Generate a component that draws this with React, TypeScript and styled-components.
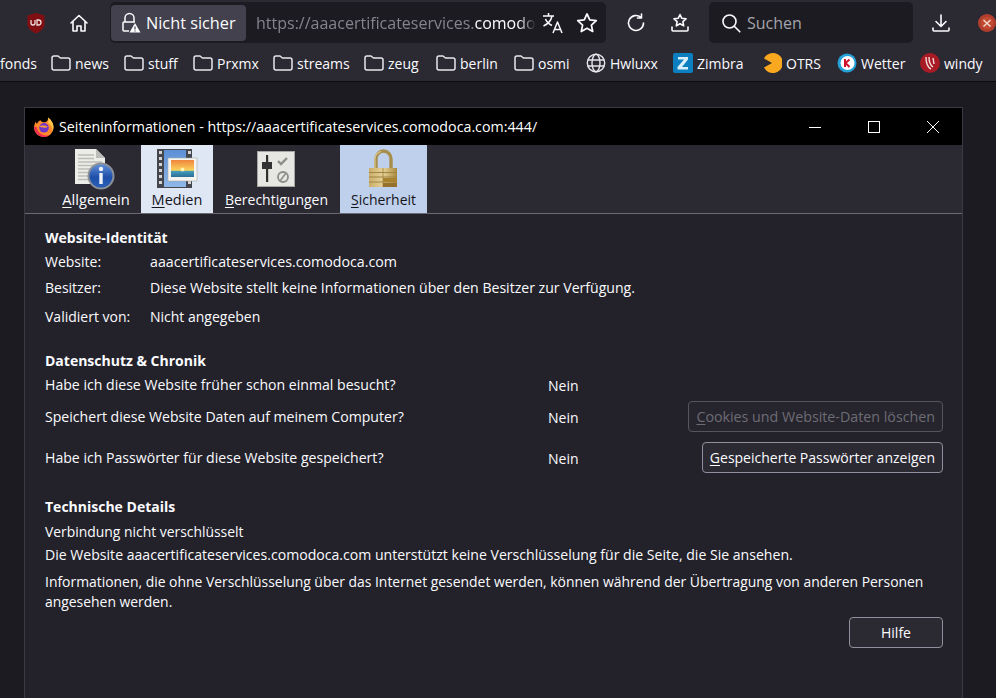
import React from "react";
import styled, { createGlobalStyle } from "styled-components";

const GlobalStyle = createGlobalStyle`
  html, body {
    margin: 0;
    padding: 0;
    width: 996px;
    height: 698px;
    overflow: hidden;
    background: #1c1b22;
    font-family: "Open Sans", "Noto Sans", sans-serif;
    color: #fbfbfe;
  }
`;

const Page = styled.div`
  width: 996px;
  height: 698px;
  display: flex;
  flex-direction: column;
  overflow: hidden;
`;

const Toolbar = styled.div`
  height: 45px;
  background: #2b2a33;
  display: flex;
  align-items: center;
  white-space: nowrap;
  overflow: hidden;
`;

const ToolIcon = styled.div<{ $w?: number; $ml?: number }>`
  width: ${(p) => p.$w ?? 22}px;
  margin-left: ${(p) => p.$ml ?? 0}px;
  height: 22px;
  flex: none;
  display: flex;
  align-items: center;
  justify-content: center;
`;

const UrlBar = styled.div`
  margin-left: 20px;
  width: 496px;
  height: 41px;
  flex: none;
  background: #1c1b22;
  border-radius: 5px;
  display: flex;
  align-items: center;
`;

const Identity = styled.div`
  margin-left: 1px;
  width: 135px;
  height: 36px;
  flex: none;
  background: #42414d;
  border-radius: 4px;
  display: flex;
  align-items: center;
  gap: 5px;
  padding-left: 10px;
  box-sizing: border-box;
  font-size: 16.3px;
`;

const UrlText = styled.div`
  margin-left: 10px;
  width: 280px;
  overflow: hidden;
  font-size: 16px;
  color: #85848c;
  flex: none;
  -webkit-mask-image: linear-gradient(to right, #000 262px, transparent 280px);
  mask-image: linear-gradient(to right, #000 262px, transparent 280px);

  b {
    font-weight: 400;
    color: #fbfbfe;
  }
`;

const SearchBox = styled.div`
  margin-left: 18px;
  width: 204px;
  height: 41px;
  flex: none;
  background: #1c1b22;
  border-radius: 5px;
  display: flex;
  align-items: center;
  gap: 6px;
  padding-left: 12px;
  box-sizing: border-box;
  font-size: 16px;
  color: #a5a4ab;
`;

const BookmarkBar = styled.div`
  height: 36px;
  background: #2b2a33;
  border-bottom: 1px solid #0c0c0d;
  display: flex;
  align-items: center;
  font-size: 14px;
  color: #fbfbfe;
  white-space: nowrap;
  overflow: hidden;
`;

const Bookmark = styled.div<{ $w: number }>`
  width: ${(p) => p.$w}px;
  display: flex;
  align-items: center;
  gap: 4px;
  flex: none;
`;

const Content = styled.div`
  flex: 1;
  background: #1c1b22;
  padding: 25px 0 0 24px;
  min-height: 0;
`;

const Dialog = styled.div`
  width: 937px;
  height: 620px;
  background: #23222b;
  border: 1px solid #3a3a42;
  border-bottom: 0;
  display: flex;
  flex-direction: column;
`;

const TitleBar = styled.div`
  height: 37px;
  background: #000;
  flex: none;
  display: flex;
  align-items: center;
  padding-left: 9px;
  font-size: 14.25px;
  color: #fff;
  gap: 5px;
`;

const TitleText = styled.div`
  flex: 1;
`;

const WinControls = styled.div`
  display: flex;
  flex: none;
`;

const WinButton = styled.div`
  width: 59px;
  height: 37px;
  display: flex;
  align-items: center;
  justify-content: center;
`;

const TabStrip = styled.div`
  height: 69px;
  box-sizing: border-box;
  flex: none;
  background: #2b2a33;
  border-bottom: 1px solid #6b6a72;
  display: flex;
  padding-left: 26px;
`;

const Tab = styled.div<{ $bg?: string; $w: number; $size?: number }>`
  width: ${(p) => p.$w}px;
  background: ${(p) => p.$bg ?? "transparent"};
  color: ${(p) => (p.$bg ? "#15141a" : "#fbfbfe")};
  display: flex;
  flex-direction: column;
  align-items: center;
  font-size: ${(p) => p.$size ?? 14}px;
  padding-top: 1px;
  box-sizing: border-box;
  height: 68px;

  svg {
    display: block;
    flex: none;
  }

  span {
    line-height: 19px;
  }
`;

const Body = styled.div`
  flex: 1;
  padding: 14px 19px 0 20px;
  font-size: 14px;
  color: #fbfbfe;
`;

const Heading = styled.div`
  font-weight: 700;
  font-size: 14px;
  line-height: 20px;
`;

const InfoRow = styled.div<{ $mt: number }>`
  display: flex;
  margin-top: ${(p) => p.$mt}px;
  line-height: 20px;
`;

const InfoLabel = styled.div`
  width: 105px;
  flex: none;
`;

const InfoValue = styled.div<{ $size?: number }>`
  font-size: ${(p) => p.$size ?? 14}px;
`;

const Section = styled.div<{ $mt: number }>`
  margin-top: ${(p) => p.$mt}px;
`;

const PrivacyRow = styled.div<{ $mt: number; $h: number }>`
  display: flex;
  align-items: center;
  height: ${(p) => p.$h}px;
  margin-top: ${(p) => p.$mt}px;
`;

const Question = styled.div`
  width: 503px;
  flex: none;
  font-size: 14.1px;
`;

const Answer = styled.div`
  flex: 1;
  margin-top: 2px;
`;

const Btn = styled.div<{ $disabled?: boolean }>`
  height: 31px;
  box-sizing: border-box;
  border: 1px solid ${(p) => (p.$disabled ? "#56555c" : "#8f8f9d")};
  border-radius: 4px;
  background: ${(p) => (p.$disabled ? "#26252e" : "#2b2a33")};
  color: ${(p) => (p.$disabled ? "#6d6c74" : "#fbfbfe")};
  display: flex;
  align-items: center;
  padding: 0 7px;
  font-size: ${(p) => (p.$disabled ? 14.25 : 14)}px;
`;

const Text = styled.div<{ $mt?: number; $size?: number }>`
  margin-top: ${(p) => p.$mt ?? 0}px;
  font-size: ${(p) => p.$size ?? 14}px;
  line-height: 20px;
`;

const Footer = styled.div`
  display: flex;
  justify-content: flex-end;
  margin-top: 5px;
`;

const HelpBtn = styled(Btn)`
  width: 94px;
  justify-content: center;
`;

const U = styled.span`
  text-decoration: underline;
  text-underline-offset: 2px;
`;

const Stroke = ({ children, size = 20 }: { children: React.ReactNode; size?: number }) => (
  <svg width={size} height={size} viewBox="0 0 20 20" fill="none" stroke="#fbfbfe" strokeWidth="1.6" strokeLinecap="round" strokeLinejoin="round">
    {children}
  </svg>
);

const Folder = () => (
  <svg width="20" height="18" viewBox="0 0 20 18" fill="none" stroke="#e6e6ea" strokeWidth="1.5" strokeLinejoin="round">
    <path d="M1 4a2 2 0 0 1 2-2h4l2.4 2H17a2 2 0 0 1 2 2v8a2 2 0 0 1-2 2H3a2 2 0 0 1-2-2z" />
  </svg>
);

const Globe = () => (
  <svg width="20" height="20" viewBox="0 0 20 20" fill="none" stroke="#e6e6ea" strokeWidth="1.4">
    <circle cx="10" cy="10" r="8.7" />
    <ellipse cx="10" cy="10" rx="4" ry="8.7" />
    <path d="M1.6 7h16.8M1.6 13h16.8" />
  </svg>
);

const InfoIcon = () => (
  <svg width="44" height="44" viewBox="0 0 44 44">
    <defs>
      <linearGradient id="infoBall" x1="0" y1="0" x2="0" y2="1">
        <stop offset="0" stopColor="#5f8fd8" />
        <stop offset="0.55" stopColor="#1f4fa8" />
        <stop offset="1" stopColor="#2a5fb8" />
      </linearGradient>
    </defs>
    <path d="M1 3h21l9 9v26H1z" fill="#ecece8" />
    <path d="M22 3l9 9h-9z" fill="#bcbcb8" />
    <path d="M4 9h16M4 12.500h16M4 16h24M4 19.500h18M4 23h14M4 26.500h12M4 30h12M4 33.500h12" stroke="#bdbdb8" strokeWidth="1.6" />
    <circle cx="27" cy="30" r="13.500" fill="#8c9199" />
    <circle cx="27" cy="30" r="11.500" fill="url(#infoBall)" />
    <circle cx="27" cy="23" r="2.200" fill="#eef2fa" />
    <rect x="25.300" y="27" width="3.400" height="11" fill="#eef2fa" />
  </svg>
);

const MediaIcon = () => (
  <svg width="44" height="44" viewBox="0 0 44 44">
    <defs>
      <linearGradient id="sunset" x1="0" y1="0" x2="0" y2="1">
        <stop offset="0" stopColor="#f0853e" />
        <stop offset="0.6" stopColor="#fbd25a" />
        <stop offset="0.68" stopColor="#3f9abc" />
        <stop offset="1" stopColor="#2d6f95" />
      </linearGradient>
      <linearGradient id="filmBlue" x1="0" y1="0" x2="0" y2="1">
        <stop offset="0" stopColor="#5c8fd6" />
        <stop offset="1" stopColor="#8fb8e8" />
      </linearGradient>
    </defs>
    <rect x="2" y="3" width="35" height="39" fill="#43464c" />
    <rect x="9" y="4" width="22" height="37" fill="url(#filmBlue)" />
    {[5, 11, 17, 23, 29, 35].map((y) => (
      <rect key={y} x="4" y={y} width="3" height="3" fill="#d4d4d4" />
    ))}
    {[5, 35].map((y) => (
      <rect key={y} x="33" y={y} width="3" height="3" fill="#d4d4d4" />
    ))}
    <rect x="13" y="12" width="29" height="23" fill="#f4f4f0" stroke="#a8a8a4" strokeWidth="0.6" />
    <rect x="16" y="14" width="23" height="17" fill="url(#sunset)" />
    <circle cx="27.500" cy="23.500" r="2" fill="#fff2b0" />
  </svg>
);

const PermIcon = () => (
  <svg width="45" height="44" viewBox="0 0 45 44">
    <rect x="3" y="5" width="38" height="36" fill="#e6e6e3" />
    <rect x="3.500" y="5.500" width="37" height="35" fill="none" stroke="#a6a6a3" />
    <rect x="12" y="9" width="2.200" height="27" fill="#303030" />
    <rect x="8" y="16" width="10" height="7" fill="#333" />
    <path d="M24 15l3 3 6-6" fill="none" stroke="#8c8c8a" strokeWidth="2.400" />
    <circle cx="29" cy="31" r="5" fill="none" stroke="#8c8c8a" strokeWidth="1.800" />
    <path d="M26 35l6-8" stroke="#8c8c8a" strokeWidth="1.600" />
  </svg>
);

const LockIcon = () => (
  <svg width="45" height="44" viewBox="0 0 45 44">
    <defs>
      <linearGradient id="lockBody" x1="0" y1="0" x2="1" y2="0">
        <stop offset="0" stopColor="#c9ae68" />
        <stop offset="0.5" stopColor="#e6d198" />
        <stop offset="1" stopColor="#a98a3c" />
      </linearGradient>
    </defs>
    <path d="M15 23v-10a7.500 8 0 0 1 15 0v10" fill="none" stroke="#a88e4c" strokeWidth="3.400" />
    <path d="M14 22v-9a8 8 0 0 1 6-7.500" fill="none" stroke="#d9c68f" strokeWidth="1.200" />
    <rect x="8" y="22" width="28" height="19" fill="url(#lockBody)" />
    <path d="M8 26.500h28M8 31h28M8 36h28" stroke="#a08442" strokeWidth="1.200" />
    <path d="M22 22v19" stroke="#9a7f3e" strokeWidth="0.800" />
    <rect x="22" y="32" width="14" height="4" fill="#a8812e" />
    <rect x="22" y="37" width="14" height="4" fill="#94702a" />
  </svg>
);

const FirefoxIcon = () => (
  <svg width="20" height="20" viewBox="0 0 20 20">
    <path d="M14 0.500c3.500 2.500 5.500 6 5.500 9.800a9.700 9.700 0 0 1-19.400 0c0-2 .6-4 1.700-5.600.2 1 .7 1.700 1.200 2.200C3.800 4.800 5 3.500 6.500 3.200c.3 1 1.500 1.800 3 2.100C12 5.700 14.500 4 14 .5z" fill="#ff8a2b" />
    <path d="M14 0.500c3.500 2.500 5.500 6 5.500 9.800 0 1.500-.4 3-1 4.200.2-4-1.500-7-4.500-8.800.6-1.700.6-3.400 0-5.200z" fill="#ffc94a" />
    <path d="M0.100 10.300a9.700 9.700 0 0 0 15 8.100C9 19.500 3.500 16 2.500 9.500z" fill="#f0304e" />
    <circle cx="10" cy="10.800" r="4.800" fill="#6e35c9" />
    <path d="M5.300 9.500c1.600-1.300 6-1.500 8.500.6-1.500.7-3 .8-4.200.4-1.700-.2-3.200-.4-4.300-1z" fill="#ff9a3a" />
  </svg>
);

const bookmarks: [string, number][] = [
  ["news", 73],
  ["stuff", 69],
  ["Prxmx", 80],
  ["streams", 91],
  ["zeug", 72],
  ["berlin", 78],
  ["osmi", 72],
];

const Clipped = styled.span`
  width: 51px;
  flex: none;
`;

export default function App() {
  return (
    <Page>
      <GlobalStyle />
      <Toolbar>
        <ToolIcon $ml={25}>
          <svg width="20" height="22" viewBox="0 0 20 22">
            <path d="M10 1l8.500 2.500v9c0 4-4 7-8.500 9-4.500-2-8.500-5-8.500-9v-9z" fill="#800f14" />
            <path d="M5 8v3a2 2 0 0 0 4 0V8M11 8v5h1.500a2.500 2.500 0 0 0 0-5z" fill="none" stroke="#f2dede" strokeWidth="1.300" />
          </svg>
        </ToolIcon>
        <ToolIcon $ml={21}>
          <Stroke>
            <path d="M2 10l8-7.500 8 7.500M4 8.500V18h4v-5h4v5h4V8.500" />
          </Stroke>
        </ToolIcon>
        <UrlBar>
          <Identity>
            <svg width="20" height="22" viewBox="0 0 20 22" fill="none" stroke="#fbfbfe" strokeWidth="1.500">
              <path d="M4 10V6a4.500 4.500 0 0 1 9 0v4" />
              <path d="M8 19H3a1 1 0 0 1-1-1v-7a1 1 0 0 1 1-1h11" />
              <path d="M14 11l5.500 9.500h-11z" fill="#fbfbfe" stroke="none" />
              <path d="M14 14.500v3M14 18.500v1" stroke="#42414d" strokeWidth="1.200" />
            </svg>
            Nicht sicher
          </Identity>
          <UrlText>
            https://aaacertificateservices.<b>comodoca</b>.com
          </UrlText>
          <ToolIcon $ml={6}>
            <svg width="22" height="22" viewBox="0 0 22 22" fill="none" stroke="#fbfbfe" strokeWidth="1.500" strokeLinejoin="round">
              <path d="M1 4h11M6.500 1v3M10 4c-1 5-4 8-8.500 10M3.500 7c1 3 3.500 5 6.500 6.500M11 21l4.500-11 4.500 11M12.500 17.500h6" />
            </svg>
          </ToolIcon>
          <ToolIcon $ml={12}>
            <Stroke size={22}>
              <path d="M10 1.800l2.500 5.400 5.900.7-4.400 4 1.200 5.800L10 14.800l-5.200 2.900L6 11.900l-4.400-4 5.900-.7z" />
            </Stroke>
          </ToolIcon>
        </UrlBar>
        <ToolIcon $ml={19}>
          <Stroke>
            <path d="M17.500 10a7.500 7.500 0 1 1-2.500-5.600M15.500 1v4h-4" />
          </Stroke>
        </ToolIcon>
        <ToolIcon $ml={22}>
          <Stroke>
            <path d="M10 1.500l1.800 3.800 4.200.5-3.100 2.900.8 4.100-3.700-2-3.700 2 .8-4.100L4 5.800l4.200-.5zM2 14v3a1 1 0 0 0 1 1h14a1 1 0 0 0 1-1v-3" />
          </Stroke>
        </ToolIcon>
        <SearchBox>
          <Stroke>
            <circle cx="8.500" cy="8.500" r="6.500" />
            <path d="M13.300 13.300l5.500 5.500" />
          </Stroke>
          Suchen
        </SearchBox>
        <ToolIcon $ml={17}>
          <Stroke>
            <path d="M10 2v11M5 8.500l5 5 5-5M2 15v2a1 1 0 0 0 1 1h14a1 1 0 0 0 1-1v-2" />
          </Stroke>
        </ToolIcon>
        <ToolIcon $ml={26} $w={18}>
          <svg width="18" height="18" viewBox="0 0 18 18">
            <circle cx="9" cy="9" r="9" fill="#b8412e" />
            <circle cx="9" cy="9" r="7" fill="#c24a33" stroke="#a5382a" strokeWidth="1" />
            <path d="M5.500 6l7 6.500M12.500 6l-7 6.500" stroke="#f3d9c9" strokeWidth="1.500" />
          </svg>
        </ToolIcon>
      </Toolbar>
      <BookmarkBar>
        <Clipped>fonds</Clipped>
        {bookmarks.map(([name, w]) => (
          <Bookmark key={name} $w={w}>
            <Folder />
            <span>{name}</span>
          </Bookmark>
        ))}
        <Bookmark $w={87}>
          <Globe />
          <span>Hwluxx</span>
        </Bookmark>
        <Bookmark $w={89}>
          <svg width="20" height="20" viewBox="0 0 20 20">
            <rect width="20" height="20" rx="2" fill="#0b7fc0" />
            <path d="M5 4h10v2.500L9 14h6v2.500H4.500V14L11 6.500H5z" fill="#d8eefa" />
          </svg>
          <span>Zimbra</span>
        </Bookmark>
        <Bookmark $w={75}>
          <svg width="20" height="20" viewBox="0 0 20 20">
            <path d="M10 10L2 5.500A10 10 0 1 1 2 14.500z" fill="#f9a81f" />
          </svg>
          <span>OTRS</span>
        </Bookmark>
        <Bookmark $w={83}>
          <svg width="20" height="20" viewBox="0 0 20 20">
            <circle cx="10" cy="10" r="9.500" fill="#23a0d8" />
            <circle cx="10.500" cy="10" r="7" fill="#fff" />
            <path d="M8 6v8M12.500 6.500L8.500 10l4 4" fill="none" stroke="#d0112b" strokeWidth="2" />
          </svg>
          <span>Wetter</span>
        </Bookmark>
        <Bookmark $w={76}>
          <svg width="20" height="20" viewBox="0 0 20 20">
            <circle cx="10" cy="10" r="10" fill="#a81b25" />
            <path d="M6 4c0 6 1 10 5 12M9 4c0 5 1 8 4 10M13 5l1 6" fill="none" stroke="#f3dcdc" strokeWidth="1.400" />
          </svg>
          <span>windy</span>
        </Bookmark>
      </BookmarkBar>
      <Content>
        <Dialog>
          <TitleBar>
            <FirefoxIcon />
            <TitleText>Seiteninformationen - https://aaacertificateservices.comodoca.com:444/</TitleText>
            <WinControls>
              <WinButton>
                <svg width="12" height="12" viewBox="0 0 12 12" stroke="#fff"><path d="M0 6.500h12" /></svg>
              </WinButton>
              <WinButton>
                <svg width="12" height="12" viewBox="0 0 12 12" fill="none" stroke="#fff"><rect x="0.500" y="0.500" width="11" height="11" /></svg>
              </WinButton>
              <WinButton>
                <svg width="12" height="12" viewBox="0 0 12 12" stroke="#fff"><path d="M0 0l12 12M12 0L0 12" /></svg>
              </WinButton>
            </WinControls>
          </TitleBar>
          <TabStrip>
            <Tab $w={90} $size={14.7}>
              <InfoIcon />
              <span><U>A</U>llgemein</span>
            </Tab>
            <Tab $w={72} $bg="#dfe7f5" $size={14.5}>
              <MediaIcon />
              <span><U>M</U>edien</span>
            </Tab>
            <Tab $w={127}>
              <PermIcon />
              <span><U>B</U>erechtigungen</span>
            </Tab>
            <Tab $w={87} $bg="#bfd0ec">
              <LockIcon />
              <span><U>S</U>icherheit</span>
            </Tab>
          </TabStrip>
          <Body>
            <Heading>Website-Identität</Heading>
            <InfoRow $mt={4}><InfoLabel>Website:</InfoLabel><InfoValue $size={14.23}>aaacertificateservices.comodoca.com</InfoValue></InfoRow>
            <InfoRow $mt={6}><InfoLabel>Besitzer:</InfoLabel><InfoValue $size={14.08}>Diese Website stellt keine Informationen über den Besitzer zur Verfügung.</InfoValue></InfoRow>
            <InfoRow $mt={9}><InfoLabel>Validiert von:</InfoLabel><InfoValue>Nicht angegeben</InfoValue></InfoRow>
            <Section $mt={24}>
              <Heading>Datenschutz &amp; Chronik</Heading>
              <PrivacyRow $mt={3} $h={20}>
                <Question>Habe ich diese Website früher schon einmal besucht?</Question>
                <Answer>Nein</Answer>
              </PrivacyRow>
              <PrivacyRow $mt={7} $h={31}>
                <Question>Speichert diese Website Daten auf meinem Computer?</Question>
                <Answer>Nein</Answer>
                <Btn $disabled><U>C</U>ookies und Website-Daten löschen</Btn>
              </PrivacyRow>
              <PrivacyRow $mt={10} $h={31}>
                <Question>Habe ich Passwörter für diese Website gespeichert?</Question>
                <Answer>Nein</Answer>
                <Btn><U>G</U>espeicherte Passwörter anzeigen</Btn>
              </PrivacyRow>
            </Section>
            <Section $mt={24}>
              <Heading>Technische Details</Heading>
              <Text $mt={5} $size={13.9}>Verbindung nicht verschlüsselt</Text>
              <Text $mt={3} $size={14.08}>Die Website aaacertificateservices.comodoca.com unterstützt keine Verschlüsselung für die Seite, die Sie ansehen.</Text>
              <Text $mt={7} $size={13.92}>Informationen, die ohne Verschlüsselung über das Internet gesendet werden, können während der Übertragung von anderen Personen angesehen werden.</Text>
            </Section>
            <Footer>
              <HelpBtn>Hilfe</HelpBtn>
            </Footer>
          </Body>
        </Dialog>
      </Content>
    </Page>
  );
}
